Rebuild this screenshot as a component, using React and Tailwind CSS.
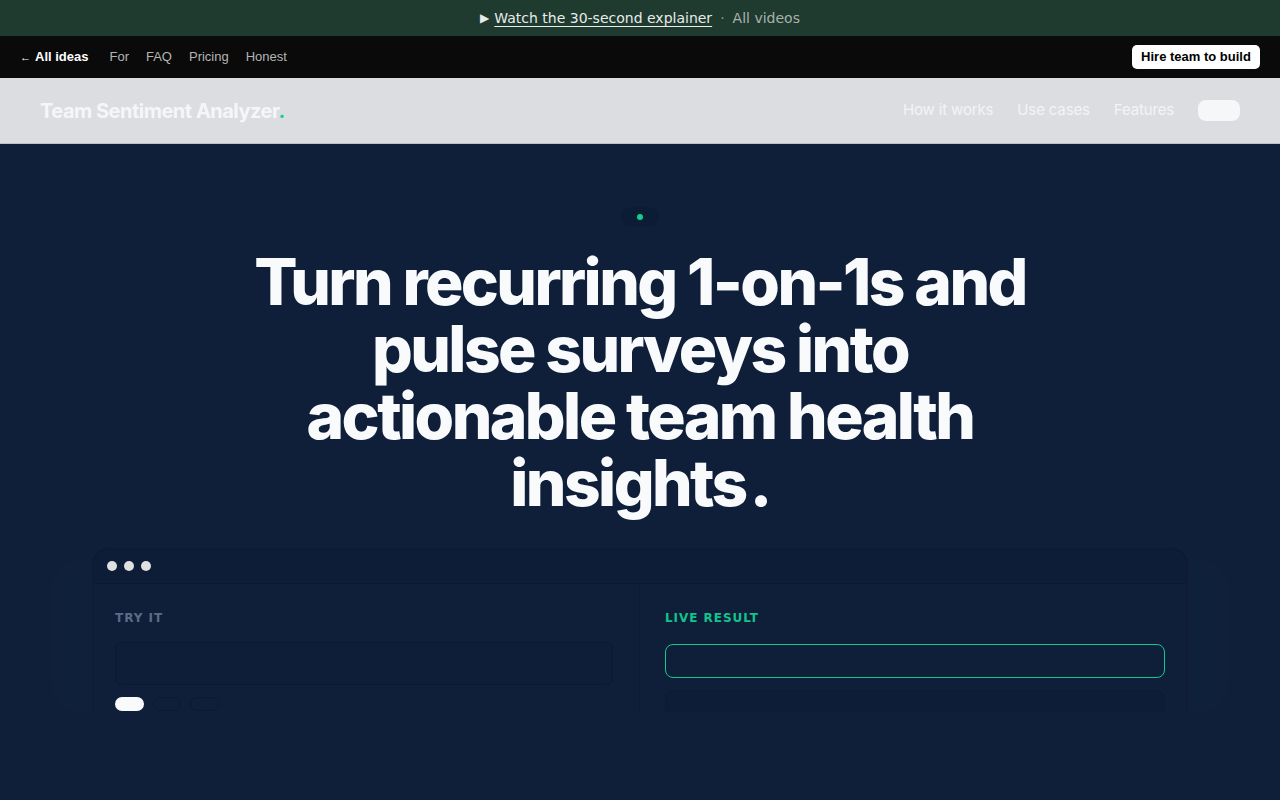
export default function App() {
  return (
    <div className="min-h-[800px] bg-[#0f1f3a]">
      {/* Top banner */}
      <div className="h-9 bg-[#1f3a2f] flex items-center justify-center text-[14px] text-[#e8ecea]" style={{ fontFamily: '"DejaVu Sans", sans-serif' }}>
        <span className="text-[12px] mr-[5px]">▶</span>
        <span className="underline underline-offset-[3px]">Watch the 30-second explainer</span>
        <span className="text-[#8a9691] mx-[8px]">·</span>
        <span className="text-[#a7b2ad]">All videos</span>
      </div>

      {/* Top nav */}
      <div className="h-[42px] bg-[#0a0a0a] flex items-center justify-between px-5 text-[13px]" style={{ fontFamily: '"Liberation Sans", Arial, sans-serif' }}>
        <div className="flex items-center gap-[17px]">
          <span className="text-white font-bold mr-[4px]"><span className="font-normal text-[11px] mr-[4px]">←</span>All ideas</span>
          <span className="text-[#b5b5b5]">For</span>
          <span className="text-[#b5b5b5]">FAQ</span>
          <span className="text-[#b5b5b5]">Pricing</span>
          <span className="text-[#b5b5b5]">Honest</span>
        </div>
        <div className="h-6 w-32 bg-white rounded-[5px] flex items-center justify-center text-black font-bold text-[13px]">Hire team to build</div>
      </div>

      {/* Site header */}
      <div className="h-[66px] bg-[#dcdde1] border-b border-[#bfc0c4] flex items-center justify-between px-10" style={{ fontFamily: 'Inter, sans-serif' }}>
        <div className="text-[20px] font-bold tracking-[-0.025em] text-[#f5f6f8]">
          Team Sentiment Analyzer<span className="text-[#10d08a]">.</span>
        </div>
        <div className="flex items-center gap-6 text-[15px] text-[#f3f4f6] tracking-[-0.01em]">
          <span>How it works</span>
          <span>Use cases</span>
          <span>Features</span>
          <div className="w-[42px] h-[21px] rounded-lg bg-[#f6f7f9]"></div>
        </div>
      </div>

      {/* Hero */}
      <div className="pt-[63px] flex flex-col items-center" style={{ fontFamily: 'Inter, sans-serif' }}>
        <div className="w-[38px] h-[19px] rounded-full bg-[#0d1c35] flex items-center justify-center">
          <div className="w-[6px] h-[6px] rounded-full bg-[#10d08a]"></div>
        </div>
        <h1 className="mt-[22px] text-center text-[64px] leading-[67px] font-extrabold tracking-[-0.04em] text-[#f8fafc]">
          Turn recurring 1-on-1s and<br />
          pulse surveys into<br />
          actionable team health<br />
          insights<span className="ml-[4px]">.</span>
        </h1>

        {/* Card */}
        <div className="relative mt-8 w-[1096px]">
          <div className="absolute -left-10 -right-10 top-[12px] bottom-0 rounded-[28px] bg-[#112240]/25"></div>
          <div className="relative rounded-t-[16px] bg-[#0e1d37] border border-[#0c1a33] border-b-0 overflow-hidden h-[164px]">
            <div className="h-[35px] flex items-center gap-[7px] pl-[14px] border-b border-[#0b1830]">
              <div className="w-[10px] h-[10px] rounded-full bg-[#e0e0e0]"></div>
              <div className="w-[10px] h-[10px] rounded-full bg-[#e0e0e0]"></div>
              <div className="w-[10px] h-[10px] rounded-full bg-[#e0e0e0]"></div>
            </div>
            <div className="grid grid-cols-2 h-full bg-[#0f1f3a]">
              <div className="pl-[22px] pr-[26px] pt-[26px] border-r border-[#0c1a32]">
                <div className="text-[12px] font-bold tracking-[0.08em] text-[#5c6c86] leading-4" style={{ fontFamily: '"DejaVu Sans", sans-serif' }}>TRY IT</div>
                <div className="mt-[16px] h-[43px] rounded-md border border-[#0c1a31] bg-[#0e1e38]"></div>
                <div className="mt-[12px] flex gap-[9px]">
                  <div className="w-[29px] h-[14px] rounded-full bg-[#f8fafc]"></div>
                  <div className="w-[28px] h-[14px] rounded-full border border-[#0c1a31]"></div>
                  <div className="w-[29px] h-[14px] rounded-full border border-[#0c1a31]"></div>
                </div>
              </div>
              <div className="pl-[25px] pr-[22px] pt-[26px]">
                <div className="text-[12px] font-bold tracking-[0.08em] text-[#12c48b] leading-4" style={{ fontFamily: '"DejaVu Sans", sans-serif' }}>LIVE RESULT</div>
                <div className="mt-[18px] h-[34px] rounded-lg border border-[#12c98c] bg-[#0f1f3a]"></div>
                <div className="mt-[12px] h-[40px] rounded-lg border border-[#0d1b34] bg-[#0e1d37]"></div>
              </div>
            </div>
          </div>
        </div>
      </div>
    </div>
  );
}
